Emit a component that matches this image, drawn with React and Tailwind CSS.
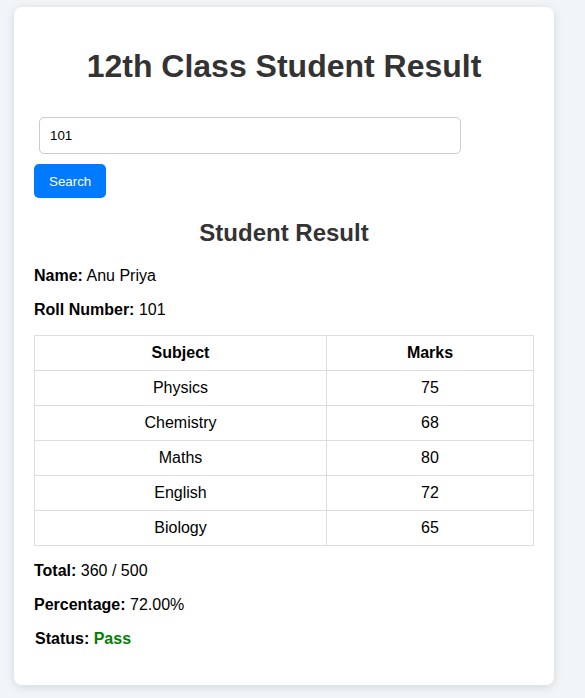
import React, { useState } from 'react';

const marks = [
  { subject: 'Physics', marks: 75 },
  { subject: 'Chemistry', marks: 68 },
  { subject: 'Maths', marks: 80 },
  { subject: 'English', marks: 72 },
  { subject: 'Biology', marks: 65 },
];

const App = () => {
  const [roll, setRoll] = useState('101');
  const total = marks.reduce((acc, m) => acc + m.marks, 0);
  const percent = ((total / 500) * 100).toFixed(2);

  return (
    <div className="min-h-screen bg-[#f2f5f8] pt-[7px] pl-[14px] font-['Liberation_Sans',Arial,sans-serif] text-black">
      <div className="w-[540px] bg-white rounded-[8px] shadow-[0_2px_10px_rgba(0,0,0,0.12)] p-[20px]">
        <h1 className="mt-[21px] text-center text-[32px] leading-[37px] font-bold text-[#333]">
          12th Class Student Result
        </h1>

        <div>
          <input
            value={roll}
            onChange={(e) => setRoll(e.target.value)}
            className="block w-[422px] mt-[32px] mb-[10px] ml-[5px] px-[10px] py-[10px] text-[13.33px] leading-[15px] border border-[#ccc] rounded-[5px] outline-none"
          />
          <button className="block h-[34px] px-[15px] bg-[#007bff] text-white text-[13.33px] leading-[15px] rounded-[5px]">
            Search
          </button>
        </div>

        {/* RESULT */}
        <h2 className="mt-[21px] mb-[20px] text-center text-[24px] leading-[28px] font-bold text-[#333]">
          Student Result
        </h2>
        <p className="text-[16px] leading-[18px] mb-[16px]"><b>Name:</b> Anu Priya</p>
        <p className="text-[16px] leading-[18px] mb-[16px]"><b>Roll Number:</b> {roll}</p>

        <table className="w-full border-collapse text-[16px] leading-[18px]">
          <thead>
            <tr>
              <th className="w-[292px] border border-[#ddd] p-[8px] font-bold">Subject</th>
              <th className="border border-[#ddd] p-[8px] font-bold">Marks</th>
            </tr>
          </thead>
          <tbody>
            {marks.map((m) => (
              <tr key={m.subject}>
                <td className="border border-[#ddd] p-[8px] text-center">{m.subject}</td>
                <td className="border border-[#ddd] p-[8px] text-center">{m.marks}</td>
              </tr>
            ))}
          </tbody>
        </table>

        <p className="mt-[16px] text-[16px] leading-[18px]"><b>Total:</b> {total} / 500</p>
        <p className="mt-[16px] text-[16px] leading-[18px]"><b>Percentage:</b> {percent}%</p>
        <p className="mt-[16px] mb-[17px] text-[16px] leading-[18px] font-bold pl-px">
          Status: <span className="text-[#008000]">Pass</span>
        </p>
      </div>
    </div>
  );
};

export default App;
